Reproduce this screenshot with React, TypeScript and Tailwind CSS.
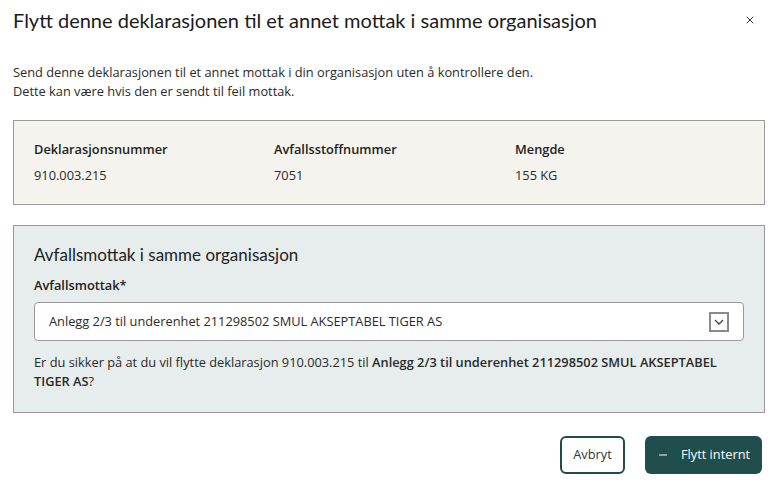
import { X, Minus } from "lucide-react";

const body = "font-['Open_Sans',sans-serif]";
const display = "font-['Lato',sans-serif]";

const facts = [
  { label: "Deklarasjonsnummer", value: "910.003.215" },
  { label: "Avfallsstoffnummer", value: "7051" },
  { label: "Mengde", value: "155 KG" },
];

const mottak = "Anlegg 2/3 til underenhet 211298502 SMUL AKSEPTABEL TIGER AS";

export default function App() {
  return (
    <div className={`w-[778px] h-[488px] bg-white text-[#222] ${body}`}>
      <div className="flex items-start justify-between pl-[13px] pr-[22px] pt-[6px]">
        <h1 className={`${display} text-[20px] leading-[28px] text-[#1b1b1b]`}>
          Flytt denne deklarasjonen til et annet mottak i samme organisasjon
        </h1>
        <button className="mt-[8px] text-[#333]">
          <X size={12} strokeWidth={2} />
        </button>
      </div>

      <p className="px-[13px] mt-[29px] text-[12.8px] leading-[19px] text-[#2a2a2a]">
        Send denne deklarasjonen til et annet mottak i din organisasjon uten å kontrollere den.
        <br />
        Dette kan være hvis den er sendt til feil mottak.
      </p>

      <div className="mx-[13px] mt-[19px] h-[85px] border border-[#9a9a9a] bg-[#f4f3ee] px-[20px] pt-[19px] grid grid-cols-[240px_241px_1fr]">
        {facts.map((f) => (
          <div key={f.label}>
            <div className="text-[12.8px] leading-[19px] font-semibold text-[#222]">{f.label}</div>
            <div className="mt-[7px] text-[12.8px] leading-[19px] text-[#2a2a2a]">{f.value}</div>
          </div>
        ))}
      </div>

      <div className="mx-[13px] mt-[20px] h-[188px] border border-[#9a9a9a] bg-[#e6edec] px-[20px] pt-[17px]">
        <h2 className={`${display} text-[17px] leading-[24px] text-[#222]`}>
          Avfallsmottak i samme organisasjon
        </h2>
        <div className="mt-[9px] text-[12.8px] leading-[19px] font-semibold text-[#222]">Avfallsmottak*</div>
        <div className="mt-[7px] h-[39px] rounded-[4px] border border-[#9a9a9a] bg-white flex items-center justify-between pl-[14px] pr-[14px]">
          <span className="text-[12.8px] text-[#2a2a2a]">{mottak}</span>
          <span className="w-[20px] h-[20px] border-2 border-[#8a8a8a] flex items-center justify-center">
            <svg width="10" height="6" viewBox="0 0 10 6" fill="none">
              <path d="M1 1l4 4 4-4" stroke="#444" strokeWidth="1.3" />
            </svg>
          </span>
        </div>
        <div className="mt-[12px] text-[12.8px] leading-[19px] text-[#2a2a2a]">
          <p>
            Er du sikker på at du vil flytte deklarasjon 910.003.215 til{" "}
            <b className="font-semibold">Anlegg 2/3 til underenhet 211298502 SMUL AKSEPTABEL</b>
          </p>
          <p>
            <b className="font-semibold">TIGER AS</b>?
          </p>
        </div>
      </div>

      <div className="flex justify-end gap-[20px] px-[16px] mt-[23px]">
        <button className="h-[38px] w-[65px] rounded-[6px] border-2 border-[#1f4b4b] bg-white text-[12.8px] text-[#1f3a3a]">
          Avbryt
        </button>
        <button className="h-[38px] w-[117px] rounded-[6px] bg-[#1f4e4d] text-white text-[12.8px] flex items-center justify-center gap-[12px]">
          <Minus size={12} strokeWidth={2} />
          Flytt internt
        </button>
      </div>
    </div>
  );
}
